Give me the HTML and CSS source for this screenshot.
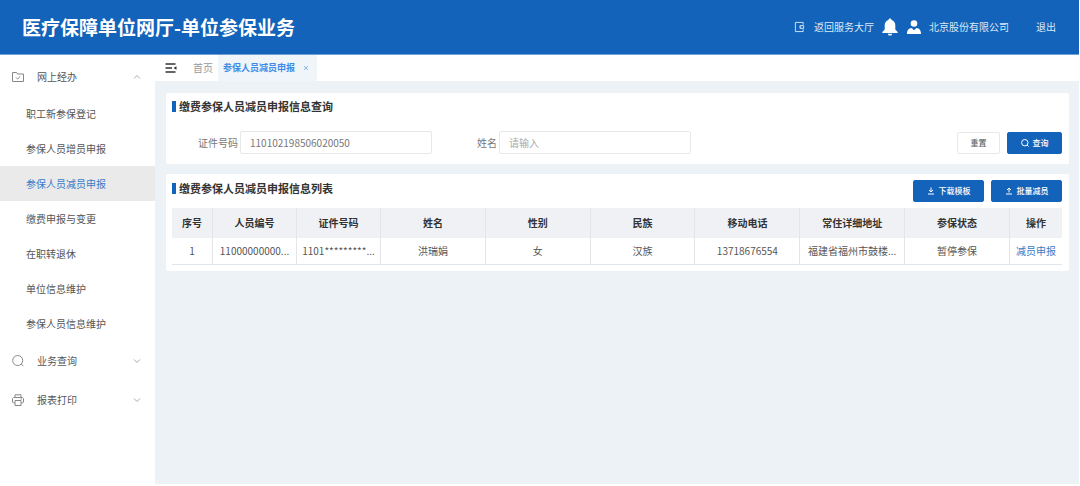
FILE: index.html
```html
<!DOCTYPE html>
<html lang="zh-CN">
<head>
<meta charset="utf-8">
<title>医疗保障单位网厅-单位参保业务</title>
<link rel="stylesheet" href="styles.css">
</head>
<body>
<div class="app">
  <header class="topbar">
    <h1 class="topbar-title">医疗保障单位网厅-单位参保业务</h1>
    <div class="topbar-actions">
      <a class="hall-link" href="#">
        <svg class="icon-hall" viewBox="0 0 12 12" fill="none" stroke="currentColor"><path d="M10 3.5V1H1.5v10H10V8.500M10.500 4.500H6.500v3h4zM6.500 6h1.500"/></svg>
        <span>返回服务大厅</span>
      </a>
      <button class="icon-button" type="button" aria-label="消息">
        <svg class="icon-bell" viewBox="0 0 16 18" fill="currentColor"><path d="M8 .5c.9 0 1.500.6 1.500 1.400C12 2.600 13.300 4.700 13.300 7.300V11.500L15.700 14v1H.3v-1l2.400-2.500V7.300C2.700 4.700 4 2.600 6.500 1.900 6.500 1.100 7.100.5 8 .5zM5.800 15.700h4.400c-.2 1.200-1 1.900-2.200 1.900s-2-.7-2.200-1.900z"/></svg>
      </button>
      <span class="company">
        <svg class="icon-user" viewBox="0 0 14 14" fill="currentColor"><circle cx="7" cy="3.500" r="3.300"/><path d="M0 14c0-4 1.600-5.500 4.600-6L7 10.200 9.400 8c3 .5 4.600 2 4.600 6z"/></svg>
        <span>北京股份有限公司</span>
      </span>
      <a class="logout" href="#">退出</a>
    </div>
  </header>

  <div class="body">
    <nav class="sidebar">
      <button class="group" type="button">
        <svg class="group-icon" viewBox="0 0 12 12" fill="none" stroke="currentColor"><path d="M.5 1.500h4L5.500 3h6v7.500H.5zM4 6.500l1.500 1.500L8.300 5.300"/></svg>
        <span>网上经办</span>
        <svg class="chevron" viewBox="0 0 8 8" fill="none" stroke="currentColor"><path d="M1 5.500l3-3 3 3"/></svg>
      </button>
      <a class="item" href="#">职工新参保登记</a>
      <a class="item" href="#">参保人员增员申报</a>
      <a class="item item-active" href="#">参保人员减员申报</a>
      <a class="item" href="#">缴费申报与变更</a>
      <a class="item" href="#">在职转退休</a>
      <a class="item" href="#">单位信息维护</a>
      <a class="item" href="#">参保人员信息维护</a>
      <button class="group" type="button">
        <svg class="group-icon" viewBox="0 0 12 12" fill="none" stroke="currentColor"><circle cx="5.700" cy="5.500" r="5"/><path d="M9.300 9l2 2.200"/></svg>
        <span>业务查询</span>
        <svg class="chevron" viewBox="0 0 8 8" fill="none" stroke="currentColor"><path d="M1 2.500l3 3 3-3"/></svg>
      </button>
      <button class="group" type="button">
        <svg class="group-icon" viewBox="0 0 12 12" fill="none" stroke="currentColor"><path d="M3 3.500V.8h6v2.700M3 9H1.500L.5 8V4.500l1-1h9l1 1V8l-1 1H9M3 6.500h6v5H3zM8.500 5H10"/></svg>
        <span>报表打印</span>
        <svg class="chevron" viewBox="0 0 8 8" fill="none" stroke="currentColor"><path d="M1 2.500l3 3 3-3"/></svg>
      </button>
    </nav>

    <main class="main">
      <div class="tabs">
        <button class="icon-button fold" type="button" aria-label="收起菜单">
          <svg class="icon-fold" viewBox="0 0 12 10" fill="none" stroke="currentColor" stroke-width="1.300"><path d="M.5 1h10M.5 5h6.500M.5 9h10"/><path d="M11.500 3.300v3.400L8.500 5z" fill="currentColor" stroke="none"/></svg>
        </button>
        <a class="tab" href="#">首页</a>
        <div class="tab tab-active">
          <a href="#">参保人员减员申报</a>
          <button class="icon-button" type="button" aria-label="关闭"><svg class="icon-close" viewBox="0 0 6 6" fill="none" stroke="currentColor"><path d="M1 1l4 4M5 1L1 5"/></svg></button>
        </div>
      </div>

      <div class="content">
        <section class="card query">
          <h2 class="card-title">缴费参保人员减员申报信息查询</h2>
          <form class="form">
            <div class="field">
              <label for="cert">证件号码</label>
              <input id="cert" type="text" value="110102198506020050">
            </div>
            <div class="field">
              <label for="name">姓名</label>
              <input id="name" type="text" placeholder="请输入">
            </div>
            <div class="form-buttons">
              <button class="btn btn-plain" type="reset">重置</button>
              <button class="btn btn-short" type="button">
                <svg class="btn-icon" viewBox="0 0 8 8" fill="none" stroke="currentColor"><circle cx="3.800" cy="3.700" r="3.200"/><path d="M6 6l1.600 1.600"/></svg>
                <span>查询</span>
              </button>
            </div>
          </form>
        </section>

        <section class="card list">
          <div class="list-head">
            <h2 class="card-title">缴费参保人员减员申报信息列表</h2>
            <div class="list-buttons">
              <button class="btn" type="button">
                <svg class="btn-icon" viewBox="0 0 8 8" fill="none" stroke="currentColor"><path d="M4 .5V5M2 3l2 2 2-2M1 7h6"/></svg>
                <span>下载模板</span>
              </button>
              <button class="btn" type="button">
                <svg class="btn-icon" viewBox="0 0 8 8" fill="none" stroke="currentColor"><path d="M4 5.500V1M2 3l2-2 2 2M1 7h6"/></svg>
                <span>批量减员</span>
              </button>
            </div>
          </div>
          <table class="table">
            <colgroup>
              <col class="col-index"><col class="col-code"><col class="col-code">
              <col><col><col><col><col><col>
              <col class="col-action">
            </colgroup>
            <thead>
              <tr><th>序号</th><th>人员编号</th><th>证件号码</th><th>姓名</th><th>性别</th><th>民族</th><th>移动电话</th><th>常住详细地址</th><th>参保状态</th><th>操作</th></tr>
            </thead>
            <tbody>
              <tr><td>1</td><td>11000000000...</td><td>1101*********...</td><td>洪瑞娟</td><td>女</td><td>汉族</td><td>13718676554</td><td>福建省福州市鼓楼...</td><td>暂停参保</td><td><a class="row-link" href="#">减员申报</a></td></tr>
            </tbody>
          </table>
        </section>
      </div>
    </main>
  </div>
</div>
</body>
</html>
```

FILE: styles.css
```css
* {
  box-sizing: border-box;
}

body {
  margin: 0;
  background: #fff;
  color: #555;
  font: 10px/16px "Noto Sans CJK SC", sans-serif;
}

a {
  color: inherit;
  text-decoration: none;
}

button,
input {
  margin: 0;
  font: inherit;
  color: inherit;
}

h1,
h2 {
  margin: 0;
}

svg {
  display: block;
  flex: none;
}

.app {
  display: flex;
  flex-direction: column;
  min-height: 100vh;
  padding: 0 1px 2px 0;
}

.icon-button {
  padding: 0;
  border: 0;
  background: none;
}

/* Top bar */
.topbar {
  display: flex;
  align-items: center;
  justify-content: space-between;
  height: 55px;
  padding: 0 23px 0 22px;
  border-bottom: 1px solid #6f9fd3;
  background: #1263b9;
  color: #fff;
}

.topbar-title {
  font-size: 19px;
  line-height: 28px;
  font-weight: 700;
}

.topbar-actions {
  display: flex;
  align-items: center;
  color: #dce9f7;
}

.hall-link,
.company {
  display: flex;
  align-items: center;
}

.hall-link {
  gap: 9px;
  margin-right: 8px;
}

.company {
  gap: 8px;
  margin: 0 27px 0 9px;
}

.icon-hall {
  width: 11px;
  height: 12px;
}

.icon-bell {
  width: 16px;
  height: 18px;
  color: #fff;
}

.icon-user {
  width: 14px;
  height: 14px;
  color: #fff;
}

.body {
  display: flex;
  flex: 1;
}

/* Side menu */
.sidebar {
  flex: none;
  width: 155px;
  padding-top: 2px;
  background: #fff;
}

.group {
  display: flex;
  align-items: center;
  gap: 13px;
  width: 100%;
  height: 39px;
  padding: 0 14px 0 12px;
  border: 0;
  background: none;
  text-align: left;
}

.group-icon {
  width: 12px;
  height: 12px;
  color: #888;
}

.chevron {
  width: 8px;
  height: 8px;
  margin-left: auto;
  color: #aaa;
}

.item {
  display: block;
  padding: 0 26px;
  line-height: 35px;
}

.item-active {
  background: #eaeaea;
  color: #3c7bc6;
}

/* Main area */
.main {
  flex: 1;
  min-width: 0;
  background: #edf2f6;
}

.tabs {
  display: flex;
  align-items: center;
  height: 26px;
  padding-left: 10px;
  background: #fff;
}

.fold {
  margin-right: 16px;
}

.icon-fold {
  width: 12px;
  height: 10px;
  color: #333;
}

.tab {
  margin-right: 5px;
  color: #999;
}

.tab-active {
  display: flex;
  align-items: center;
  align-self: stretch;
  gap: 8px;
  padding: 0 8px 0 5px;
  background: #f0f5fa;
  color: #3d8be6;
  font-size: 9px;
  font-weight: 700;
}

.icon-close {
  width: 6px;
  height: 6px;
  color: #8db6e4;
}

.content {
  display: flex;
  flex-direction: column;
  gap: 10px;
  padding: 12px 10px 12px 11px;
}

.card {
  padding: 0 7px 0 6px;
  border-radius: 2px;
  background: #fff;
}

.card-title {
  display: flex;
  align-items: center;
  gap: 3px;
  color: #333;
  font-size: 11px;
  line-height: 16px;
  font-weight: 700;
}

.card-title::before {
  content: "";
  width: 4px;
  height: 11px;
  background: #1263b9;
}

/* Query form */
.query {
  padding-top: 5px;
  padding-bottom: 10px;
}

.form {
  display: flex;
  align-items: center;
  gap: 45px;
  margin-top: 17px;
  padding-left: 26px;
}

.field {
  display: flex;
  align-items: center;
  gap: 2px;
  color: #777;
}

.field input {
  width: 192px;
  height: 23px;
  padding: 0 9px;
  border: 1px solid #e8e8e8;
  border-radius: 2px;
  background: #fff;
}

.field input::placeholder {
  color: #aaa;
  opacity: 1;
}

.form-buttons,
.list-buttons {
  display: flex;
  gap: 7px;
  margin-left: auto;
}

.btn {
  display: flex;
  align-items: center;
  justify-content: center;
  gap: 4px;
  width: 71px;
  height: 22px;
  padding: 0;
  border: 1px solid #1263b9;
  border-radius: 2px;
  background: #1263b9;
  color: #fff;
  font-size: 8px;
  font-weight: 500;
}

.btn-short {
  width: 55px;
}

.btn-plain {
  width: 43px;
  border-color: #e8e8e8;
  background: #fff;
  color: #666;
}

.btn-icon {
  width: 8px;
  height: 8px;
}

/* List */
.list {
  padding-top: 6px;
  padding-bottom: 6px;
}

.list-head {
  display: flex;
  align-items: flex-start;
  justify-content: space-between;
  margin-bottom: 6px;
}

.table {
  width: 100%;
  border-collapse: separate;
  border-spacing: 0;
  table-layout: fixed;
}

.col-index {
  width: 41px;
}

.col-code {
  width: 84px;
}

.col-action {
  width: 52px;
}

.table th,
.table td {
  padding: 0;
  border-right: 1px solid #e4e5e8;
  text-align: center;
  white-space: nowrap;
}

.table th:last-child,
.table td:last-child {
  border-right: 0;
}

.table th {
  height: 30px;
  background: #f0f1f5;
  color: #333;
  font-weight: 700;
}

.table td {
  height: 27px;
  border-bottom: 1px solid #e4e5e8;
}

.row-link {
  color: #3c7bc6;
}
```
